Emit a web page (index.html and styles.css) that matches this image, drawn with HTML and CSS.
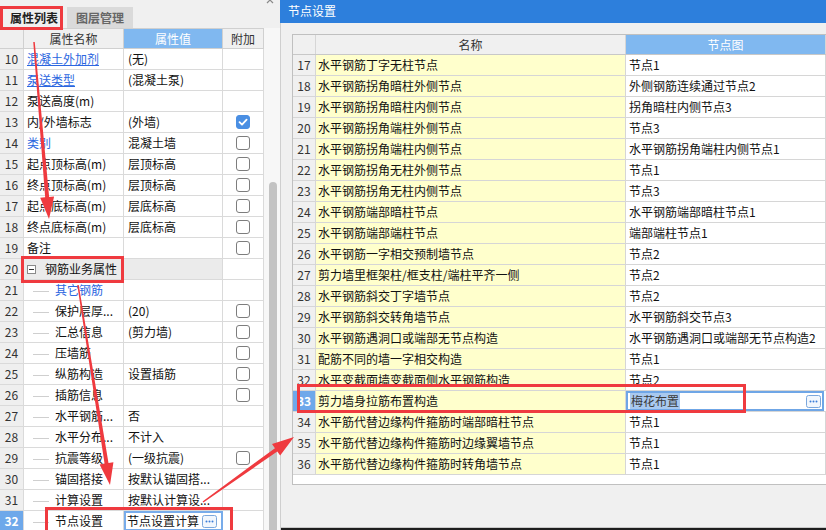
FILE: index.html
```html
<!DOCTYPE html>
<html lang="zh">
<head>
<meta charset="utf-8">
<title>节点设置</title>
<link rel="stylesheet" href="styles.css">
</head>
<body>
<div class="page">
  <div class="left">
    <div class="tabs">
      <div class="tab active">属性列表</div>
      <div class="tab inactive">图层管理</div>
      <svg class="close" width="8" height="4" viewBox="0 0 8 4"><path d="M1 -3 L7 3 M7 -3 L1 3" stroke="#8a8a8a" stroke-width="1.2"/></svg>
    </div>
    <div class="lbody">
      <div class="lgrid">
        <div class="lrow head"><div class="num"></div><div class="hc">属性名称</div><div class="hc sel">属性值</div><div class="hc">附加</div></div>
        <div class="lrow"><div class="num">10</div><div class="name link u">混凝土外加剂</div><div class="val">(无)</div><div class="add"></div></div>
        <div class="lrow"><div class="num">11</div><div class="name link u">泵送类型</div><div class="val">(混凝土泵)</div><div class="add"></div></div>
        <div class="lrow"><div class="num">12</div><div class="name">泵送高度(m)</div><div class="val"></div><div class="add"></div></div>
        <div class="lrow"><div class="num">13</div><div class="name">内/外墙标志</div><div class="val">(外墙)</div><div class="add"><span class="cb on"><svg width="14" height="14" viewBox="0 0 14 14"><path d="M3.5 7.2 L6 9.6 L10.6 4.6" fill="none" stroke="#fff" stroke-width="1.8" stroke-linecap="round" stroke-linejoin="round"/></svg></span></div></div>
        <div class="lrow"><div class="num">14</div><div class="name link">类别</div><div class="val">混凝土墙</div><div class="add"><span class="cb"></span></div></div>
        <div class="lrow"><div class="num">15</div><div class="name">起点顶标高(m)</div><div class="val">层顶标高</div><div class="add"><span class="cb"></span></div></div>
        <div class="lrow"><div class="num">16</div><div class="name">终点顶标高(m)</div><div class="val">层顶标高</div><div class="add"><span class="cb"></span></div></div>
        <div class="lrow"><div class="num">17</div><div class="name">起点底标高(m)</div><div class="val">层底标高</div><div class="add"><span class="cb"></span></div></div>
        <div class="lrow"><div class="num">18</div><div class="name">终点底标高(m)</div><div class="val">层底标高</div><div class="add"><span class="cb"></span></div></div>
        <div class="lrow"><div class="num">19</div><div class="name">备注</div><div class="val"></div><div class="add"><span class="cb"></span></div></div>
        <div class="lrow group"><div class="num">20</div><div class="gname"><svg class="minus" width="9" height="9" viewBox="0 0 9 9"><rect x="0.5" y="0.5" width="8" height="8" fill="#fff" stroke="#8a8a8a"/><path d="M2 4.5 H7" stroke="#333" stroke-width="1"/></svg>钢筋业务属性</div><div class="add"></div></div>
        <div class="lrow"><div class="num">21</div><div class="name tree link"><i class="br"></i>其它钢筋</div><div class="val"></div><div class="add"></div></div>
        <div class="lrow"><div class="num">22</div><div class="name tree"><i class="br"></i>保护层厚...</div><div class="val">(20)</div><div class="add"><span class="cb"></span></div></div>
        <div class="lrow"><div class="num">23</div><div class="name tree"><i class="br"></i>汇总信息</div><div class="val">(剪力墙)</div><div class="add"><span class="cb"></span></div></div>
        <div class="lrow"><div class="num">24</div><div class="name tree"><i class="br"></i>压墙筋</div><div class="val"></div><div class="add"><span class="cb"></span></div></div>
        <div class="lrow"><div class="num">25</div><div class="name tree"><i class="br"></i>纵筋构造</div><div class="val">设置插筋</div><div class="add"><span class="cb"></span></div></div>
        <div class="lrow"><div class="num">26</div><div class="name tree"><i class="br"></i>插筋信息</div><div class="val"></div><div class="add"><span class="cb"></span></div></div>
        <div class="lrow"><div class="num">27</div><div class="name tree"><i class="br"></i>水平钢筋...</div><div class="val">否</div><div class="add"></div></div>
        <div class="lrow"><div class="num">28</div><div class="name tree"><i class="br"></i>水平分布...</div><div class="val">不计入</div><div class="add"></div></div>
        <div class="lrow"><div class="num">29</div><div class="name tree"><i class="br"></i>抗震等级</div><div class="val">(一级抗震)</div><div class="add"><span class="cb"></span></div></div>
        <div class="lrow"><div class="num">30</div><div class="name tree"><i class="br"></i>锚固搭接</div><div class="val">按默认锚固搭...</div><div class="add"></div></div>
        <div class="lrow"><div class="num">31</div><div class="name tree"><i class="br"></i>计算设置</div><div class="val">按默认计算设...</div><div class="add"></div></div>
        <div class="lrow"><div class="num cur">32</div><div class="name tree"><i class="br"></i>节点设置</div><div class="val edit"><span class="etext">节点设置计算</span><svg class="dots" width="15" height="13" viewBox="0 0 15 13"><rect x="0.5" y="0.5" width="14" height="12" rx="2" fill="#f2f7fd" stroke="#7ba7dc"/><circle cx="4.5" cy="6.5" r="1" fill="#3b7dd8"/><circle cx="7.5" cy="6.5" r="1" fill="#3b7dd8"/><circle cx="10.5" cy="6.5" r="1" fill="#3b7dd8"/></svg></div><div class="add"></div></div>
      </div>
      <div class="vscroll"><div class="thumb"></div></div>
    </div>
  </div>

  <div class="right">
    <div class="title">节点设置</div>
    <div class="rbody">
      <div class="rtable">
        <div class="rrow head"><div class="rnum"></div><div class="rhc">名称</div><div class="rhc sel">节点图</div></div>
        <div class="rrow"><div class="rnum">17</div><div class="rname">水平钢筋丁字无柱节点</div><div class="rval">节点1</div></div>
        <div class="rrow"><div class="rnum">18</div><div class="rname">水平钢筋拐角暗柱外侧节点</div><div class="rval">外侧钢筋连续通过节点2</div></div>
        <div class="rrow"><div class="rnum">19</div><div class="rname">水平钢筋拐角暗柱内侧节点</div><div class="rval">拐角暗柱内侧节点3</div></div>
        <div class="rrow"><div class="rnum">20</div><div class="rname">水平钢筋拐角端柱外侧节点</div><div class="rval">节点3</div></div>
        <div class="rrow"><div class="rnum">21</div><div class="rname">水平钢筋拐角端柱内侧节点</div><div class="rval">水平钢筋拐角端柱内侧节点1</div></div>
        <div class="rrow"><div class="rnum">22</div><div class="rname">水平钢筋拐角无柱外侧节点</div><div class="rval">节点1</div></div>
        <div class="rrow"><div class="rnum">23</div><div class="rname">水平钢筋拐角无柱内侧节点</div><div class="rval">节点3</div></div>
        <div class="rrow"><div class="rnum">24</div><div class="rname">水平钢筋端部暗柱节点</div><div class="rval">水平钢筋端部暗柱节点1</div></div>
        <div class="rrow"><div class="rnum">25</div><div class="rname">水平钢筋端部端柱节点</div><div class="rval">端部端柱节点1</div></div>
        <div class="rrow"><div class="rnum">26</div><div class="rname">水平钢筋一字相交预制墙节点</div><div class="rval">节点2</div></div>
        <div class="rrow"><div class="rnum">27</div><div class="rname">剪力墙里框架柱/框支柱/端柱平齐一侧</div><div class="rval">节点2</div></div>
        <div class="rrow"><div class="rnum">28</div><div class="rname">水平钢筋斜交丁字墙节点</div><div class="rval">节点2</div></div>
        <div class="rrow"><div class="rnum">29</div><div class="rname">水平钢筋斜交转角墙节点</div><div class="rval">水平钢筋斜交节点3</div></div>
        <div class="rrow"><div class="rnum">30</div><div class="rname">水平钢筋遇洞口或端部无节点构造</div><div class="rval">水平钢筋遇洞口或端部无节点构造2</div></div>
        <div class="rrow"><div class="rnum">31</div><div class="rname">配筋不同的墙一字相交构造</div><div class="rval">节点1</div></div>
        <div class="rrow"><div class="rnum">32</div><div class="rname">水平变截面墙变截面侧水平钢筋构造</div><div class="rval">节点2</div></div>
        <div class="rrow"><div class="rnum cur">33</div><div class="rname">剪力墙身拉筋布置构造</div><div class="rval edit"><span class="selt">梅花布置</span><svg class="dots" width="15" height="13" viewBox="0 0 15 13"><rect x="0.5" y="0.5" width="14" height="12" rx="2" fill="#f2f7fd" stroke="#7ba7dc"/><circle cx="4.5" cy="6.5" r="1" fill="#3b7dd8"/><circle cx="7.5" cy="6.5" r="1" fill="#3b7dd8"/><circle cx="10.5" cy="6.5" r="1" fill="#3b7dd8"/></svg></div></div>
        <div class="rrow"><div class="rnum">34</div><div class="rname">水平筋代替边缘构件箍筋时端部暗柱节点</div><div class="rval">节点1</div></div>
        <div class="rrow"><div class="rnum">35</div><div class="rname">水平筋代替边缘构件箍筋时边缘翼墙节点</div><div class="rval">节点1</div></div>
        <div class="rrow"><div class="rnum">36</div><div class="rname">水平筋代替边缘构件箍筋时转角墙节点</div><div class="rval">节点1</div></div>
        <div class="rfill"></div>
      </div>
      <div class="rfoot"></div>
    </div>
  </div>

  <svg class="overlay" width="826" height="530" viewBox="0 0 826 530">
    <g fill="none" stroke="#ef3a3f" stroke-width="3">
      <rect x="1.5" y="7.5" width="60" height="21"/>
      <rect x="22.5" y="257.5" width="100" height="24"/>
      <rect x="46.5" y="508.5" width="185" height="26"/>
      <rect x="298.5" y="385.5" width="446" height="26"/>
    </g>
    <g fill="#ef3a3f">
      <polygon points="33.25,42.06 34.75,41.94 49.13,196.91 54.11,196.49 49,219 40.17,197.67 45.15,197.25"/>
      <polygon points="77.26,285.12 78.74,284.88 108.5,462.95 113.43,462.16 110,485 99.61,464.38 104.55,463.59"/>
      <polygon points="203.44,502.61 202.56,501.39 274.94,448.16 272.03,444.09 294,437 280.17,455.49 277.26,451.42"/>
    </g>
  </svg>
</div>
</body>
</html>
```

FILE: styles.css
```css
* { box-sizing: border-box; }

body {
  margin: 0;
  width: 826px;
  height: 530px;
  overflow: hidden;
  font-family: "Noto Sans CJK SC", "Microsoft YaHei", sans-serif;
  font-size: 12px;
  color: #111;
  background: #f0f0f0;
}

.page {
  position: relative;
  display: flex;
  width: 826px;
  height: 530px;
  overflow: hidden;
}

/* ---------- left panel ---------- */
.left {
  width: 280px;
  flex: none;
  display: flex;
  flex-direction: column;
  background: #f0f0f0;
}

.tabs {
  height: 28px;
  flex: none;
  display: flex;
  align-items: flex-end;
  gap: 3px;
  padding-left: 2px;
  position: relative;
}

.tab {
  height: 21px;
  line-height: 21px;
  font-weight: bold;
  font-size: 12px;
}

.tab.active {
  padding: 0 6px 0 8px;
  color: #222;
}

.tab.inactive {
  padding: 0 9px;
  background: #dadada;
  color: #666;
}

.close {
  position: absolute;
  left: 266px;
  top: 0;
  display: block;
}

.lbody {
  flex: 1;
  display: flex;
  overflow: hidden;
}

.lgrid {
  width: 264px;
  flex: none;
  background: #fff;
}

.lrow {
  display: grid;
  grid-template-columns: 24px 100px 99px 41px;
  height: 21px;
  border-bottom: 1px solid #dadada;
}

.lrow > div {
  border-right: 1px solid #dadada;
  line-height: 20px;
  white-space: nowrap;
  overflow: hidden;
}

.lrow.head {
  height: 21px;
  border-top: 1px solid #d0d0d0;
  border-bottom: 1px solid #d0d0d0;
  background: #f0f0f0;
}

.lrow.head > div {
  line-height: 19px;
  border-right-color: #d0d0d0;
}

.hc {
  text-align: center;
  color: #333;
}

.hc.sel {
  background: #80b8f0;
  color: #fff;
}

.num {
  background: #efefef;
  text-align: center;
  color: #333;
}

.num.cur {
  background: #6ea8ea;
  color: #fff;
  font-weight: bold;
}

.name {
  padding-left: 3px;
}

.name.link {
  color: #2b66e0;
}

.name.u {
  text-decoration: underline;
}

.name.tree {
  padding-left: 9px;
}

.br {
  display: inline-block;
  width: 16px;
  height: 1px;
  background: #cfcfcf;
  vertical-align: middle;
  margin-right: 6px;
}

.val {
  padding-left: 4px;
}

.val.edit {
  display: flex;
  align-items: center;
  justify-content: space-between;
  padding: 0 4px 0 2px;
  border: 2px solid #78acea;
}

.etext {
  margin-left: -1px;
}

.dots {
  flex: none;
  display: block;
}

.add {
  display: flex;
  align-items: center;
  justify-content: center;
}

.cb {
  width: 14px;
  height: 14px;
  border: 1px solid #7d7d7d;
  border-radius: 3px;
  background: #fff;
  display: block;
}

.cb.on {
  background: #4a8fe3;
  border-color: #4a8fe3;
}

.cb.on svg {
  display: block;
  margin: -1px;
}

.lrow.group .gname {
  grid-column: span 2;
  background: #ebebeb;
  padding-left: 3px;
  display: flex;
  align-items: center;
}

.minus {
  display: block;
  margin-right: 9px;
  flex: none;
}

.vscroll {
  width: 16px;
  flex: none;
  background: #f7f7f7;
  display: flex;
  flex-direction: column;
  padding: 154px 3px 0 5px;
}

.thumb {
  flex: 1;
  background: #c3c3c3;
  border-radius: 4px 4px 0 0;
}

/* ---------- right panel ---------- */
.right {
  flex: 1;
  display: flex;
  flex-direction: column;
}

.title {
  height: 23px;
  flex: none;
  background: #2d7fdc;
  color: #fff;
  font-size: 12px;
  line-height: 22px;
  padding-left: 8px;
}

.rbody {
  flex: 1;
  border-left: 1px solid #cfcfcf;
  padding: 11px 0 0 11px;
  display: flex;
  flex-direction: column;
  overflow: hidden;
}

.rtable {
  flex: none;
  border: 1px solid #c0c0c0;
  border-right: none;
  background: #fff;
}

.rrow {
  display: grid;
  grid-template-columns: 23px 310px 1fr;
  height: 21px;
  border-bottom: 1px solid #d6d6d6;
}

.rrow > div {
  border-right: 1px solid #d6d6d6;
  line-height: 20px;
  white-space: nowrap;
  overflow: hidden;
}

.rrow.head {
  height: 20px;
  border-bottom-color: #c8c8c8;
  background: #f0f0f0;
}

.rrow.head > div {
  line-height: 19px;
}

.rhc {
  text-align: center;
  color: #333;
}

.rhc.sel {
  background: #80b8f0;
  color: #fff;
}

.rnum {
  background: #f0f0f0;
  text-align: center;
  color: #333;
}

.rnum.cur {
  background: #6ea8ea;
  color: #fff;
  font-weight: bold;
}

.rname {
  background: #ffffcc;
  padding-left: 2px;
}

.rval {
  padding-left: 3px;
}

.rval.edit {
  display: flex;
  align-items: center;
  justify-content: space-between;
  border: 2px solid #6fa6e6;
  margin-right: 2px;
  padding: 0 1px 0 2px;
}

.selt {
  background: #a9c9ef;
  color: #3a3a3a;
  line-height: 16px;
  padding: 0 1px;
}

.rfill {
  height: 9px;
}

.rfoot {
  margin-top: auto;
  height: 3px;
  margin-left: -12px;
  background: #1e1e1e;
  border-top: 1px solid #c8c8c8;
}

/* ---------- annotations ---------- */
.overlay {
  position: absolute;
  left: 0;
  top: 0;
  pointer-events: none;
}
```
